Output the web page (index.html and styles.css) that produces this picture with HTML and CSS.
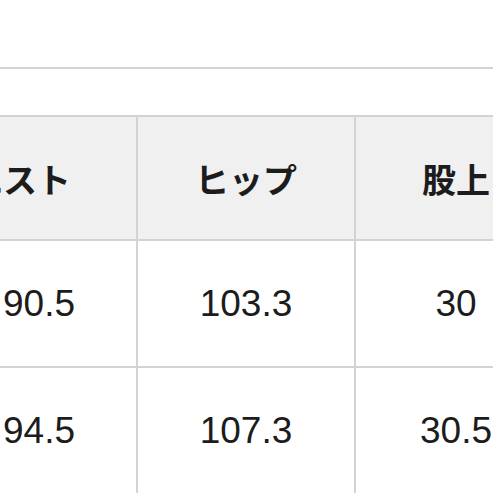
FILE: index.html
```html
<!DOCTYPE html>
<html lang="ja">
<head>
<meta charset="utf-8">
<link rel="stylesheet" href="styles.css">
</head>
<body>
<div class="page">
  <div class="top-space"></div>
  <div class="rule"></div>
  <div class="gap-space"></div>
  <div class="size-table">
    <div class="cell head first">ウエスト</div>
    <div class="cell head">ヒップ</div>
    <div class="cell head">股上</div>
    <div class="cell first">90.5</div>
    <div class="cell">103.3</div>
    <div class="cell">30</div>
    <div class="cell first">94.5</div>
    <div class="cell">107.3</div>
    <div class="cell">30.5</div>
  </div>
</div>
</body>
</html>
```
FILE: styles.css
```css
html, body {
  margin: 0;
  padding: 0;
  background: #ffffff;
  overflow: hidden;
}
.page {
  width: 493px;
  height: 493px;
  overflow: hidden;
  font-family: "Liberation Sans", "Noto Sans CJK JP", sans-serif;
  color: #1c1c1c;
}
.top-space {
  height: 67px;
}
.rule {
  height: 2px;
  background: #d3d3d3;
}
.gap-space {
  height: 46px;
}
.size-table {
  display: grid;
  grid-template-columns: 136px 216px 200px;
  grid-template-rows: 122px 125px 125px;
  gap: 2px;
  width: 556px;
  background: #d3d3d3;
  border-top: 2px solid #d3d3d3;
}
.cell {
  display: flex;
  align-items: center;
  justify-content: center;
  background: #ffffff;
  font-size: 37px;
  white-space: nowrap;
  overflow: visible;
}
.cell.head {
  background: #f0f0f0;
  font-family: "Noto Sans CJK JP", sans-serif;
  font-weight: 700;
  font-size: 34px;
}
.cell.first {
  justify-content: flex-end;
  padding-right: 61px;
}
.cell.head.first {
  padding-right: 65px;
}
```
